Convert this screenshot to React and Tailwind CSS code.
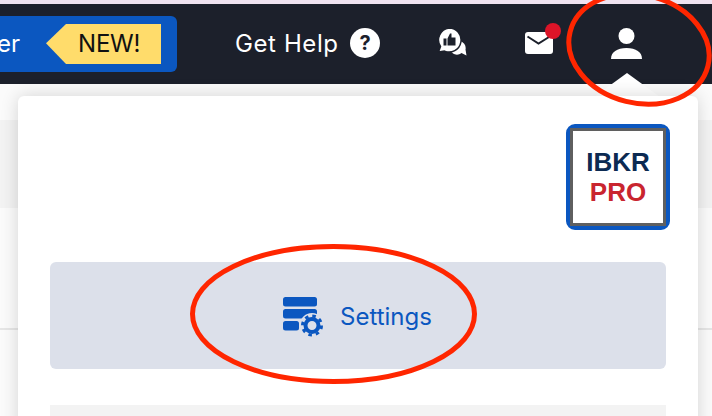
export default function App() {
  return (
    <div className="relative w-[712px] h-[416px] overflow-hidden bg-[#fbfbfb] font-['Inter',sans-serif]">
      <div className="h-1 bg-[#efe3f0]" />
      <header className="h-20 bg-[#1c202b] flex items-center">
        <div className="w-[177px] h-14 bg-[#0b57c0] rounded-r-[6px] flex items-center justify-between pr-4 shrink-0">
          <span className="text-white text-[24px] leading-none -ml-[3px]">er</span>
          <div className="relative h-10 w-[95px] bg-[#ffdc6b] flex items-center justify-start pl-3 text-[24px] text-[#111] tracking-[-0.2px]">
            NEW!
            <span className="absolute left-[-20px] top-0 w-5 h-10 bg-[#ffdc6b] [clip-path:polygon(100%_0,100%_100%,0_48%)]" />
          </div>
        </div>
        <span className="ml-[58px] w-[104px] whitespace-nowrap text-white text-[24px] leading-none tracking-[0.6px]">Get Help</span>
        <span className="ml-[11px] -mt-[2px] w-[30px] h-[30px] rounded-full bg-white flex items-center justify-center text-[#1c202b] text-[20px] font-bold">?</span>
        <svg className="ml-[57px] -mt-[5px]" width="30" height="28" viewBox="0 0 30 28">
          <path d="M22 13a7 7 0 0 1 6.500 8.500L29.500 27.500l-5-2.500a7 7 0 1 1-2.500-12z" fill="#fff" />
          <path d="M12 0a12 12 0 1 1-4.500 23.100L1.500 24l2-5.500A12 12 0 0 1 12 0z" fill="#fff" stroke="#1c202b" strokeWidth="1.500" />
          <path d="M6.500 10.500h3v7h-3zM10.500 10.500l2.500-5h1.500v4h4v8h-8z" fill="#1c202b" />
        </svg>
        <div className="relative ml-[58px] -mt-[2px] w-7 h-[22px] rounded-[3px] bg-white">
          <svg className="absolute left-0 top-0" width="28" height="22" viewBox="0 0 28 22"><path d="M2.500 4.500l11 7 10.500-6.500" fill="none" stroke="#1c202b" strokeWidth="2" /></svg>
          <span className="absolute -right-[8px] -top-[9px] w-4 h-4 rounded-full bg-[#dc1428]" />
        </div>
        <svg className="ml-[58px] -mt-[2px]" width="32" height="32" viewBox="0 0 32 32">
          <circle cx="15.500" cy="9" r="8" fill="#fff" />
          <path d="M0 32c0-7 6-11 15.500-11S31 25 31 32z" fill="#fff" />
        </svg>
      </header>
      <div className="absolute left-0 top-[120px] w-full h-[88px] bg-[#f3f3f3]" />
      <div className="absolute left-0 top-[328px] w-full h-[2px] bg-[#e6e6e6]" />
      <div className="absolute left-[594px] top-[73px] w-[66px] h-[24px] bg-white [clip-path:polygon(50%_0,100%_100%,0_100%)]" />
      <div className="absolute left-[18px] top-[96px] w-[680px] h-[340px] bg-white rounded-md shadow-[0_0_18px_rgba(0,0,0,0.16)] px-8 pt-7">
        <div className="flex justify-end">
          <div className="w-[104px] h-[106px] -mr-1 rounded-[9px] border-[4px] border-[#0b57c0] bg-white">
            <div className="h-full border-[3px] border-[#5f5f5f] flex flex-col items-center justify-center font-bold text-[26px] leading-[30px] font-['Liberation_Sans',sans-serif]">
              <span className="text-[#0c2a52]">IBKR</span>
              <span className="text-[#c9252f]">PRO</span>
            </div>
          </div>
        </div>
        <div className="mt-8 w-[616px] h-[107px] rounded-md bg-[#dce0ea] flex items-center pl-[233px] gap-[16px]">
          <svg className="mt-[3px]" width="41" height="41" viewBox="0 0 41 41">
            <rect x="0" y="0" width="34" height="9.500" rx="2.500" fill="#0b57c0" />
            <rect x="0" y="12" width="34" height="9.500" rx="2.500" fill="#0b57c0" />
            <rect x="0" y="24" width="16" height="9.500" rx="2.500" fill="#0b57c0" />
            <circle cx="29" cy="28.500" r="12.500" fill="#dce0ea" />
            <circle cx="29" cy="28.500" r="6.500" fill="none" stroke="#0b57c0" strokeWidth="4" />
            <circle cx="29" cy="28.500" r="9.500" fill="none" stroke="#0b57c0" strokeWidth="3" strokeDasharray="3.500 3.960" />
          </svg>
          <span className="text-[#0b57c0] text-[24px] leading-none mt-[3px]">Settings</span>
        </div>
        <div className="mt-[36px] w-[616px] h-20 bg-[#f3f3f3]" />
      </div>
      <svg className="absolute inset-0 pointer-events-none" width="712" height="416" viewBox="0 0 712 416" fill="none" stroke="#ff2600" strokeWidth="5">
        <ellipse cx="639" cy="49" rx="71" ry="54" transform="rotate(14 639 49)" />
        <ellipse cx="333.500" cy="314" rx="141" ry="67.500" />
      </svg>
    </div>
  );
}
